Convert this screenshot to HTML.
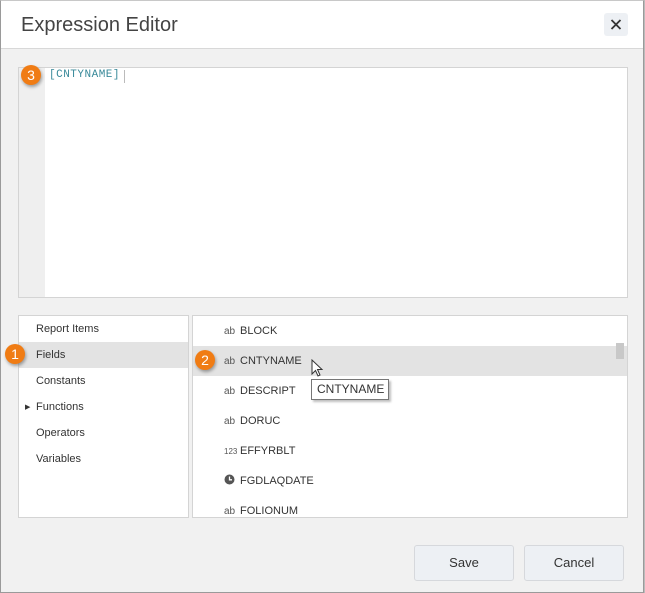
<!DOCTYPE html>
<html><head><meta charset="utf-8"><style>
*{margin:0;padding:0;box-sizing:border-box}
body{width:645px;height:593px;background:#fff;font-family:"Liberation Sans",sans-serif;position:relative;overflow:hidden}
.dlg{position:absolute;left:0;top:0;width:644px;height:593px;border:1px solid #9a9a9a;border-top-color:#c8c8c8;background:#f1f1f1;box-shadow:1px 0 0 #bbb}
.hdr{position:absolute;left:0;top:0;right:0;height:48px;background:#fff;border-bottom:1px solid #d8d8d8}
.title{position:absolute;left:20px;top:13px;font-size:20px;color:#444}
.close{position:absolute;left:603px;top:12px;width:24px;height:23px;background:#edf0f4;border-radius:3px}
.ed{position:absolute;left:17px;top:66px;width:610px;height:231px;background:#fff;border:1px solid #d4d4d4}
.gut{position:absolute;left:0;top:0;width:26px;height:100%;background:#efefef}
.code{position:absolute;left:30px;top:1px;font-family:"Liberation Mono",monospace;font-size:11px;letter-spacing:.5px;color:#3a8a9a}
.caret{position:absolute;left:105px;top:2px;width:1px;height:13px;background:#bbb}
.lp{position:absolute;left:17px;top:314px;width:171px;height:203px;background:#fff;border:1px solid #d4d4d4}
.rp{position:absolute;left:191px;top:314px;width:436px;height:203px;background:#fff;border:1px solid #d4d4d4;overflow:hidden}
.li{position:absolute;left:0;width:100%;height:26px;line-height:27px;padding-left:17px;font-size:11px;color:#333}
.ri{position:absolute;left:0;width:100%;height:30px;line-height:31px;padding-left:31px;font-size:11px;color:#333}
.ic{display:inline-block;width:13px;font-size:10px;color:#555;margin-right:3px}
.sel{background:#e3e3e3}
.badge{position:absolute;width:20px;height:20px;border-radius:50%;background:#f07c14;color:#fff;font-size:14px;line-height:20px;text-align:center;box-shadow:1px 2px 3px rgba(0,0,0,.35)}
.btn{position:absolute;top:544px;width:100px;height:36px;background:#edf0f4;border:1px solid #d6d8dc;border-radius:3px;font-size:13px;color:#333;text-align:center;line-height:34px}
.tip{position:absolute;left:311px;top:379px;width:78px;height:21px;background:#fff;border:1px solid #777;font-size:12px;color:#333;line-height:19px;padding-left:5px;box-shadow:2px 2px 2px rgba(0,0,0,.25)}
</style></head><body>
<div class="dlg">
<div class="hdr"><div class="title">Expression Editor</div>
<div class="close"><svg width="24" height="23"><path d="M7.5 7L16.5 16M16.5 7L7.5 16" stroke="#333" stroke-width="1.8"/></svg></div></div>
<div class="ed"><div class="gut"></div><div class="code">[CNTYNAME]</div><div class="caret"></div></div>
<div class="lp">
<div class="li" style="top:0">Report Items</div>
<div class="li sel" style="top:26px">Fields</div>
<div class="li" style="top:52px">Constants</div>
<div class="li" style="top:78px"><span style="position:absolute;left:6px;font-size:7px">&#9654;</span>Functions</div>
<div class="li" style="top:104px">Operators</div>
<div class="li" style="top:130px">Variables</div>
</div>
<div class="rp">
<div class="ri" style="top:0"><span class="ic">ab</span>BLOCK</div>
<div class="ri sel" style="top:30px"><span class="ic">ab</span>CNTYNAME</div>
<div class="ri" style="top:60px"><span class="ic">ab</span>DESCRIPT</div>
<div class="ri" style="top:90px"><span class="ic">ab</span>DORUC</div>
<div class="ri" style="top:120px"><span class="ic" style="font-size:8px">123</span>EFFYRBLT</div>
<div class="ri" style="top:150px"><span class="ic"><svg width="11" height="11" style="vertical-align:-1px"><circle cx="5.5" cy="5.5" r="5" fill="#555"/><path d="M5.5 2.5V5.8H8" stroke="#fff" stroke-width="1.3" fill="none"/></svg></span>FGDLAQDATE</div>
<div class="ri" style="top:180px"><span class="ic">ab</span>FOLIONUM</div>
<div style="position:absolute;left:423px;top:27px;width:8px;height:16px;background:#c8c8c8"></div>
</div>
<div class="btn" style="left:413px">Save</div>
<div class="btn" style="left:523px">Cancel</div>
</div>
<div class="badge" style="left:21px;top:65px">3</div>
<div class="badge" style="left:5px;top:344px">1</div>
<div class="badge" style="left:195px;top:350px">2</div>
<svg style="position:absolute;left:311px;top:359px" width="14" height="20"><path d="M1 1V15L4.5 11.5L7 17L9 16L6.5 10.5H11Z" fill="#fff" stroke="#333" stroke-width="1"/></svg>
<div class="tip">CNTYNAME</div>
</body></html>
